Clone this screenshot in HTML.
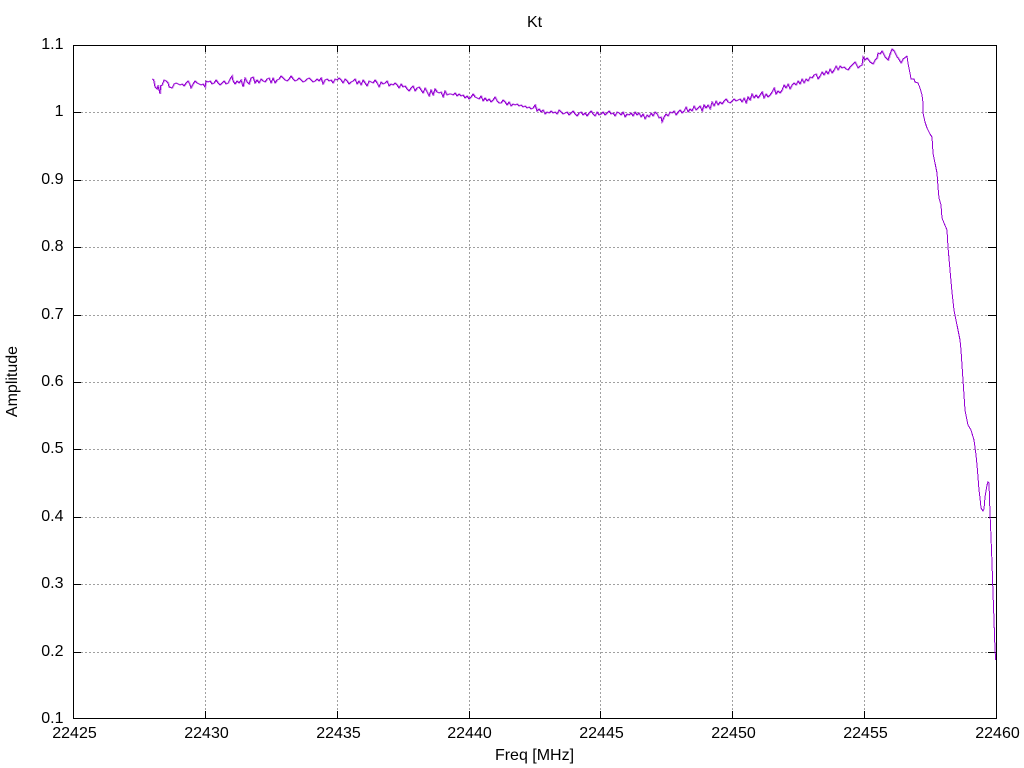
<!DOCTYPE html>
<html>
<head>
<meta charset="utf-8">
<style>
html,body{margin:0;padding:0;background:#fff;}
svg{display:block;}
text{font-family:"Liberation Sans",sans-serif;font-size:16px;fill:#000;}
</style>
</head>
<body>
<svg width="1024" height="768" viewBox="0 0 1024 768" xmlns="http://www.w3.org/2000/svg">
<rect width="1024" height="768" fill="#fff"/>
<g stroke="#a0a0a0" stroke-width="1" stroke-dasharray="2 2" fill="none" shape-rendering="crispEdges">
<path d="M81 112.5H988M81 180.5H988M81 247.5H988M81 315.5H988M81 382.5H988M81 449.5H988M81 517.5H988M81 584.5H988M81 652.5H988"/>
<path d="M205.5 52V711M337.5 52V711M469.5 52V711M600.5 52V711M732.5 52V711M864.5 52V711"/>
</g>
<g stroke="#000" stroke-width="1" fill="none" shape-rendering="crispEdges">
<path d="M73.5 45.5H996.5V718.5H73.5Z"/>
<path d="M73 112.5h8M73 180.5h8M73 247.5h8M73 315.5h8M73 382.5h8M73 449.5h8M73 517.5h8M73 584.5h8M73 652.5h8"/>
<path d="M996 112.5h-8M996 180.5h-8M996 247.5h-8M996 315.5h-8M996 382.5h-8M996 449.5h-8M996 517.5h-8M996 584.5h-8M996 652.5h-8"/>
<path d="M205.5 45v7M337.5 45v7M469.5 45v7M600.5 45v7M732.5 45v7M864.5 45v7"/>
<path d="M205.5 718v-7M337.5 718v-7M469.5 718v-7M600.5 718v-7M732.5 718v-7M864.5 718v-7"/>
</g>
<g fill="none" stroke="#9400d3" stroke-width="1" shape-rendering="crispEdges">
<use href="#n" transform="translate(1 0)" stroke-opacity="0.35"/>
<path id="n" d="M152.5 79L153.500 80L155 87L157 89L158 86L160 94L160.500 86L162 85L164 80L166 81L168 83L169 87L172 88L174 84L176 83L178 84L180 85L182 84L184 86L186 83L188 81L190 85L191 88L193 84L195 81L197 83L199 84L201 85L203 84L205 87L206 81L208 82L210 81L212 84L214 83L216 80L218 83L220 85L222 83L224 81L226 84L228 83L230 79L232 76L233 81L235 84L237 81L239 83L241 80L243 87L245 78L247 82L249 84L251 78L253 77L255 83L257 80L259 83L261 79L263 81L265 82L267 79L269 78L271 83L273 78L275 83L277 80L279 79L281 76L283 78L285 80L287 81L289 79L291 76L293 79L295 81L297 80L299 78L301 80L303 82L305 81L307 79L309 78L311 80L313 82L315 81L317 79L319 81L321 78L323 84L325 80L327 79L329 81L331 80L333 83L335 79L337 80L339 78L341 80L343 83L345 79L347 81L349 84L351 82L353 81L355 79L357 84L359 81L361 85L363 80L365 83L367 86L369 81L371 82L373 83L375 80L377 83L379 87L381 82L383 84L385 83L387 81L389 86L391 84L393 85L395 83L397 85L399 88L401 84L403 87L405 86L407 89L409 91L411 88L413 86L415 91L417 88L419 87L421 90L423 93L425 88L427 92L429 96L431 90L433 95L435 89L437 92L439 93L441 92L443 97L445 91L447 95L449 94L451 94L453 95L455 93L457 96L459 94L461 96L463 95L465 98L467 96L469 99L471 97L473 94L475 97L477 98L479 99L481 96L483 101L485 98L487 101L489 99L491 102L493 100L495 97L497 101L499 103L501 103L503 100L505 102L507 105L509 102L511 106L513 104L515 105L517 104L519 106L521 105L523 107L525 106L527 108L529 107L531 109L533 108L535 105L537 111L539 109L541 112L543 110L545 114L547 112L549 113L551 111L553 113L555 112L557 114L559 110L561 112L563 114L565 113L567 112L569 115L571 113L573 111L575 114L577 116L579 113L581 112L583 115L585 113L587 116L589 113L591 111L593 114L595 116L597 112L599 115L601 114L603 112L605 115L607 113L609 111L611 114L613 113L615 116L617 112L619 113L621 115L623 112L625 117L627 114L629 115L631 113L633 116L635 112L637 115L639 113L641 117L643 114L645 119L647 115L649 117L651 113L653 116L655 112L657 114L659 118L661 117L662 122L664 117L666 114L668 116L670 112L672 113L674 111L676 115L678 112L680 110L682 113L684 111L686 107L688 112L690 109L692 111L694 106L696 110L698 108L700 106L702 111L704 105L706 108L708 105L710 109L712 102L714 106L716 101L718 105L720 102L722 104L724 101L726 99L728 102L730 103L732 101L734 99L736 101L738 100L740 99L742 102L744 98L746 103L748 97L750 100L752 94L754 98L756 95L758 98L760 95L762 92L764 98L766 94L768 97L770 95L772 92L774 88L776 94L778 91L780 93L782 90L784 85L786 88L788 84L790 89L792 85L794 83L796 85L798 81L800 84L802 79L804 83L806 79L808 81L810 77L812 78L814 75L816 74L818 79L820 76L822 72L824 75L826 71L828 74L830 69L832 73L834 70L836 66L838 70L840 66L842 68L844 67L846 69L848 70L850 67L852 65L854 63L855 62L856 64L858 68L860 66L862 65L863 57L865 60L867 58L870 62L873 64L875 60L877 58L878 53L880 54L882 51L883 53L885 57L888 60L890 54L892 49L894 51L897 57L898 58L901 63L903 59L907 56"/>
<path d="M907 56L908 63L910 73L911 79L914 79L915 82L918 83L920 88L922 95L923 103L923 113L925 122L927 128L930 134L932 137L933 153L935 163L937 173L938 187L939 198L941 205L942 218L944 223L947 230L948 247L950 270L952 292L954 310L957 325L960 340L961 350L963 380L965 410L968 425L971 430L974 440L976 455L977 465L978 477L979 490L980 498L981 508L983 511L984 509L985 497L987 485L988 482L989 483L990 513L991 537L992 563L993 593L994 620L995 650L995.700 660"/>
</g>
<g text-anchor="end">
<text x="63.500" y="49">1.1</text>
<text x="63.500" y="116">1</text>
<text x="63.500" y="184">0.9</text>
<text x="63.500" y="251">0.8</text>
<text x="63.500" y="319">0.7</text>
<text x="63.500" y="386">0.6</text>
<text x="63.500" y="453">0.5</text>
<text x="63.500" y="521">0.4</text>
<text x="63.500" y="588">0.3</text>
<text x="63.500" y="656">0.2</text>
<text x="63.500" y="723">0.1</text>
</g>
<g text-anchor="middle">
<text x="74.500" y="738">22425</text>
<text x="206.500" y="738">22430</text>
<text x="338.500" y="738">22435</text>
<text x="469.500" y="738">22440</text>
<text x="601.500" y="738">22445</text>
<text x="733.500" y="738">22450</text>
<text x="865.500" y="738">22455</text>
<text x="997.500" y="738">22460</text>
<text x="534.500" y="760">Freq [MHz]</text>
<text x="534.500" y="27">Kt</text>
<text transform="translate(17 381.500) rotate(-90)">Amplitude</text>
</g>
</svg>
</body>
</html>
